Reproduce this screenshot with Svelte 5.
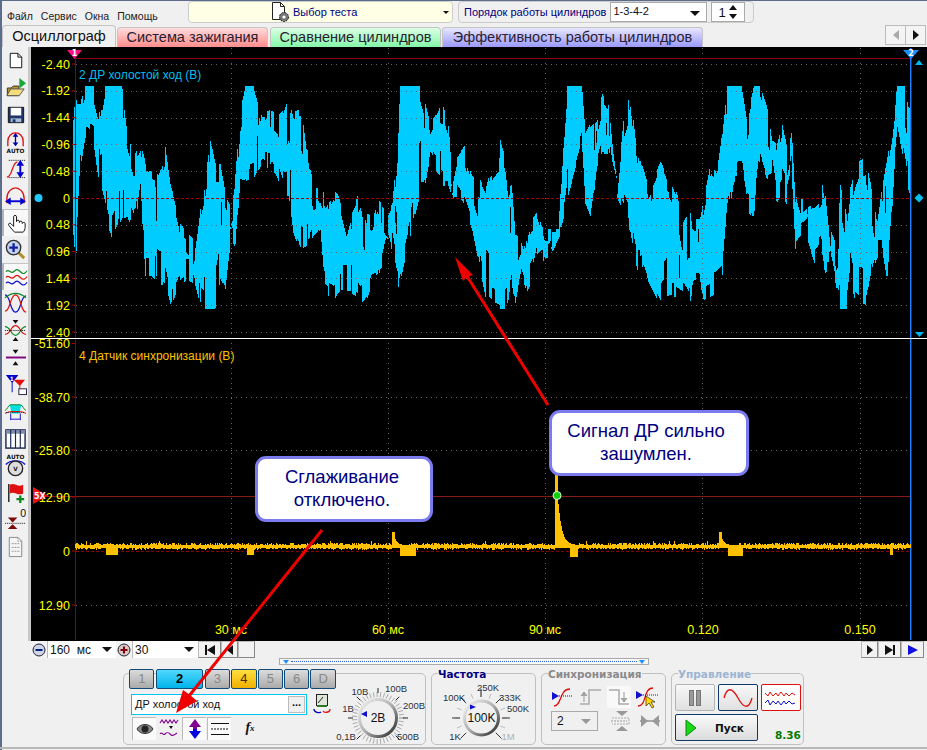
<script>
    function rng(seed) {
        let s = seed;
        return () => (s = (s * 16807) % 2147483647) / 2147483647;
    }

    // envelope of the noisy channel, read off the picture: x, top, bottom
    const left = [[0,60,270],[15,18,185],[40,18,200],[60,100,350],[75,18,410],[95,18,480],[125,18,420],[140,140,410],[160,210,460],[180,170,330],[195,250,590],[215,255,590],[235,260,610],[255,200,620],[270,310,687],[300,430,615],[320,455,600],[340,480,610],[355,370,670],[375,290,687],[390,180,687],[405,250,687],[420,250,600],[435,340,630],[450,370,500],[465,280,530],[480,90,315],[495,18,310],[520,18,300],[545,95,260],[575,85,270],[590,100,290],[610,85,350],[625,35,350],[640,95,470],[665,85,510],[685,240,500],[700,310,470],[720,310,450],[735,350,640],[760,310,670],[775,330,640],[800,430,640],[815,375,640],[840,325,680],[860,390,660],[875,400,620],[890,350,620],[920,400,500],[935,370,555],[950,200,640],[960,18,600],[1020,18,350],[1035,70,350],[1050,130,270],[1085,65,320],[1105,140,320],[1115,290,355],[1130,220,350],[1150,190,380],[1175,265,450],[1195,290,550],[1215,330,650],[1230,270,670],[1255,235,680]];
    const right = [[0,180,687],[15,235,687],[25,320,680],[32,260,600],[45,440,680],[60,450,600],[75,490,650],[85,415,630],[100,390,600],[110,375,550],[125,425,540],[140,430,550],[160,430,520],[175,430,490],[190,155,430],[200,18,360],[245,18,200],[255,150,380],[270,120,420],[290,100,270],[305,40,220],[325,70,225],[335,180,310],[350,290,370],[370,80,410],[390,18,460],[410,200,570],[430,270,560],[445,320,610],[480,240,680],[500,290,650],[530,340,650],[545,430,660],[565,395,687],[580,410,620],[600,410,625],[610,350,660],[630,245,650],[650,270,640],[665,160,625],[680,18,445],[700,18,310],[725,18,300],[740,110,400],[760,18,410],[780,18,240],[800,80,300],[815,180,280],[830,190,380],[845,130,350],[860,200,380],[875,115,320],[885,310,520],[900,360,500],[920,345,480],[945,340,560],[960,325,540],[975,300,580],[990,440,570],[1010,490,665],[1020,305,687],[1040,400,687],[1050,315,600],[1065,260,670],[1075,235,680],[1095,225,687],[1110,295,610],[1130,430,540],[1145,320,540],[1160,235,630],[1175,150,420],[1190,18,140],[1215,18,270],[1225,40,340],[1232,40,340]];

    const envelope = [[73, 110, 245], [76, 100, 252]]
        .concat(left.map(([x, t, b]) => [80 + x / 3, 80 + t / 3, 80 + b / 3]))
        .concat(right.map(([x, t, b]) => [500 + x / 3, 80 + t / 3, 80 + b / 3]))
        .sort((a, b) => a[0] - b[0]);

    function buildNoise() {
        const r = rng(4711);
        let d = "", i = 0, j1 = 0, j2 = 0, hold = 0;
        for (let x = 73; x < 911; x++) {
            while (i < envelope.length - 2 && envelope[i + 1][0] <= x) i++;
            const a = envelope[i], b = envelope[i + 1];
            const f = Math.min(1, (x - a[0]) / (b[0] - a[0] || 1));
            let top = a[1] + (b[1] - a[1]) * f;
            let bot = a[2] + (b[2] - a[2]) * f;
            if (hold-- <= 0) {
                hold = Math.floor(r() * 4);
                j1 = Math.pow(r(), 2) * 22;
                j2 = Math.pow(r(), 2) * 24;
                // deep cuts give the needle look of the trace
                if (r() < 0.09) j1 += 10 + r() * 30;
                if (r() < 0.09) j2 += 10 + r() * 26;
            }
            const thin = Math.max(24, (bot - top) * 0.5);
            top = a[1] < 87 && b[1] < 87 ? 86 : Math.max(86, Math.round(top + Math.min(j1, thin)));
            bot = a[2] > 308 && b[2] > 308 ? 309 : Math.min(309, Math.round(bot - Math.min(j2, thin)));
            if (bot <= top) bot = top + 2;
            if (r() < 0.025 && bot - top > 40) {
                const mid = top + Math.floor((bot - top) * (0.15 + r() * 0.25));
                d += `M${x}.5 ${top}V${mid}M${x}.5 ${mid + 12 + Math.floor(r() * 18)}V${bot}`;
            } else {
                d += `M${x}.5 ${top}V${bot}`;
            }
        }
        return d;
    }

    function buildSync() {
        const r = rng(90210);
        const pulses = [[392, 532, 11], [555, 470, 17], [719, 532, 11]];
        const blips = [[106, 117, 555], [247, 253, 555], [400, 415, 556], [570, 577, 557], [728, 742, 556], [890, 892, 555]];
        let d = "";
        for (let x = 75; x < 911; x++) {
            let top = 545 - Math.floor(r() * 2.6);
            let bot = 548 + Math.floor(r() * 2.2);
            if (r() < 0.012) top = 541;
            for (const [px, peak, w] of pulses) {
                if (x >= px && x < px + 3) {
                    top = peak;
                    bot = 548;
                } else if (x >= px + 3 && x < px + w + 6) {
                    const k = Math.exp(-(x - px - 2) / (w / 4.5));
                    top = Math.round(545 - (545 - peak) * k * 0.72);
                    bot = Math.max(top + 4, bot > 548 ? 548 : bot);
                }
            }
            for (const [a, b, y] of blips) if (x >= a && x <= b) bot = y;
            d += `M${x}.5 ${top}V${bot}`;
        }
        return d;
    }

    const noisePath = buildNoise();
    const syncPath = buildSync();

    const gridX = [231, 388, 545, 702, 860];
    const upperScale = ["-2.40", "-1.92", "-1.44", "-0.96", "-0.48", "0", "0.48", "0.96", "1.44", "1.92", "2.40"];
    const lowerScale = [[343.5, "-51.60"], [397, "-38.70"], [450, "-25.80"], [497, "12.90"], [551, "0"], [605, "12.90"]];
    const timeScale = [[231, "30 мс"], [388, "60 мс"], [545, "90 мс"], [703, "0.120"], [860, "0.150"]];
    const upperY = upperScale.map((_, i) => 64 + i * 26.8);

    function ticks(cx, cy, from, to, n, r1, r2) {
        const out = [];
        for (let i = 0; i < n; i++) {
            const a = ((from + ((to - from) * i) / (n - 1)) * Math.PI) / 180;
            out.push([cx + r1 * Math.cos(a), cy + r1 * Math.sin(a), cx + r2 * Math.cos(a), cy + r2 * Math.sin(a)]);
        }
        return out;
    }

    const voltTicks = ticks(378, 718, 0, 360, 44, 21, 26);
    const voltMarks = ticks(378, 718, 135, 405, 7, 25, 30);
    const freqTicks = ticks(481, 718, 135, 405, 13, 21, 26);
    const freqMarks = ticks(481, 718, 135, 405, 7, 21, 29);

    const voltLabels = [[360, 695, "10В"], [396, 692, "100В"], [414, 709, "200В"], [408, 740, "500В"], [346, 740, "0,1В"], [348, 712, "1В"]];
    const freqLabels = [[488, 691, "250K"], [454, 701, "100K"], [510, 701, "333K"], [518, 712, "500K"], [455, 740, "1K"]];
    const channels = [
        { name: "1", cls: "" },
        { name: "2", cls: "on-blue" },
        { name: "3", cls: "" },
        { name: "4", cls: "on-yellow" },
        { name: "5", cls: "" },
        { name: "6", cls: "" },
        { name: "D", cls: "" },
    ];
</script>

<div class="app">
    <header class="topbar">
        <nav class="menu">
            <span>Файл</span><span>Сервис</span><span>Окна</span><span>Помощь</span>
        </nav>
        <div class="test-select">
            <svg width="22" height="22" viewBox="0 0 22 22">
                <path d="M3.5 1.5h8l4 4v13h-12z" fill="#fff" stroke="#222" />
                <path d="M11.5 1.5v4h4" fill="none" stroke="#222" />
                <circle cx="15" cy="16" r="4.5" fill="#777" stroke="#222" stroke-dasharray="2 1" />
                <circle cx="15" cy="16" r="1.6" fill="#fff" />
            </svg>
            <span>Выбор теста</span>
            <i class="caret small"></i>
        </div>
        <div class="order">
            <span>Порядок работы цилиндров</span>
            <div class="order-select">1-3-4-2<i class="caret"></i></div>
            <div class="order-spin">1
                <svg width="10" height="16" viewBox="0 0 10 16"><path d="M5 1l4 5H1zM5 15L1 10h8z" fill="#111" /></svg>
            </div>
        </div>
    </header>

    <div class="tabs">
        <div class="tab active">Осциллограф</div>
        <div class="tab red">Система зажигания</div>
        <div class="tab green">Сравнение цилиндров</div>
        <div class="tab purple">Эффективность работы цилиндров</div>
        <div class="tab-nav">
            <span><svg width="8" height="10" viewBox="0 0 8 10"><path d="M7 0v10L1 5z" fill="#aaa" /></svg></span>
            <span><svg width="8" height="10" viewBox="0 0 8 10"><path d="M1 0v10l6-5z" fill="#111" /></svg></span>
        </div>
    </div>

    <main class="main">
        <aside class="tools">
            <div class="tool"><svg viewBox="0 0 24 24"><path d="M6.500 4.500h8l4 4v11h-12z" fill="#fff" stroke="#111" /><path d="M14.500 4.500v4h4" fill="none" stroke="#111" /></svg></div>
            <div class="tool"><svg viewBox="0 0 24 24"><path d="M3.500 12.500h4l2-2h6v10h-12z" fill="#b8962a" stroke="#333" /><path d="M3 20.500l4-7h14l-5 7z" fill="#f3dc7c" stroke="#555" /><path d="M16 2v11l7-5.500z" fill="#18a838" /></svg></div>
            <div class="tool"><svg viewBox="0 0 24 24"><path d="M4.500 4.500h16v16h-16z" fill="#22356a" stroke="#111" /><path d="M7 5h11v8H7z" fill="#fff" /><path d="M7 16h11v4H7z" fill="#a8bcd8" /><path d="M9 17h3v3H9z" fill="#22356a" /></svg></div>
            <div class="tool"><svg viewBox="0 0 24 24"><path d="M4 17V12C4 6 8 3 12 3s8 3 8 9v5" fill="none" stroke="#e01010" stroke-width="1.400" /><path d="M12 5v10" stroke="#0000b0" stroke-width="1.400" /><path d="M12 3l3 4H9zM12 17l-3-4h6z" fill="#0000b0" /><text x="12" y="23.500" class="tiny" text-anchor="middle">AUTO</text></svg></div>
            <div class="tool"><svg viewBox="0 0 24 24"><path d="M3 21c6 0 5-15 11-16" fill="none" stroke="#e01010" stroke-width="1.400" /><path d="M5 3.500h17M5 21.500h17" stroke="#111" stroke-dasharray="1 1" /><path d="M17 8v10" stroke="#0000d0" stroke-width="2" /><path d="M17 3l4 6h-8zM17 22l-4-6h8z" fill="#0000d0" /></svg></div>
            <div class="tool"><svg viewBox="0 0 24 24"><path d="M3 20v-5C3 8 8 4 12 4s9 4 9 11v5" fill="none" stroke="#e01010" stroke-width="1.400" /><path d="M5 18h14" stroke="#0000d0" stroke-width="2" /><path d="M1 18l6-4v8zM23 18l-6-4v8z" fill="#0000d0" /></svg></div>
            <div class="tool pressed"><svg viewBox="0 0 24 24"><path d="M9 20l-5-6c-1-2 1-3 2-2l3 3V5c0-2 3-2 3 0v5c0-2 3-2 3 0v1c0-2 3-2 3 0v1c0-1.500 3-1.500 3 0v4c0 2-1 4-2 5H10z" fill="#fff" stroke="#111" /></svg></div>
            <div class="tool"><svg viewBox="0 0 24 24"><path d="M14 14l7 7" stroke="#b08a2a" stroke-width="3" /><circle cx="10" cy="10" r="7.500" fill="#c4d4f0" stroke="#333" stroke-width="1.400" /><path d="M10 5.500v9M5.500 10h9" stroke="#1020a0" stroke-width="2.400" /></svg></div>
            <div class="tool pressed"><svg viewBox="0 0 24 24" fill="none" stroke-width="1.200"><path d="M1 6c3-4 5 3 8 0s4-3 7 0 5 2 7-1" stroke="#0a8a20" /><path d="M1 12c3-4 5 3 8 0s4-3 7 0 5 2 7-1" stroke="#e01010" /><path d="M1 18c3-4 5 3 8 0s4-3 7 0 5 2 7-1" stroke="#1010d0" /></svg></div>
            <div class="tool"><svg viewBox="0 0 24 24" fill="none" stroke-width="1.300"><path d="M1 3c6 0 5 18 11 18S17 4 23 4" stroke="#1010d0" /><path d="M1 20c6 0 5-17 11-17s5 18 11 18" stroke="#e01010" /><path d="M1 6c8-6 14-6 22 0" stroke="#0a8a20" /></svg></div>
            <div class="tool"><svg viewBox="0 0 24 24" fill="none" stroke-width="1.300"><path d="M1 8c6 0 6 9 11 9s5-9 11-9" stroke="#0a8a20" /><path d="M1 16c6 0 6-9 11-9s5 9 11 9" stroke="#e01010" /><path d="M1 12h22" stroke="#111" stroke-dasharray="1 1" /><path d="M12 5L9 1h6zM12 19l3 4H9z" fill="#111" /></svg></div>
            <div class="tool"><svg viewBox="0 0 24 24"><path d="M12 8L9 4h6zM12 16l3 4H9z" fill="#111" /><path d="M2 12h21" stroke="#800080" stroke-width="2" /></svg></div>
            <div class="tool"><svg viewBox="0 0 24 24"><path d="M2 2h13l-6 8v10H8V10z" fill="#0000d0" /><path d="M10 7h12l-5 6v8h-1v-8z" fill="#e01010" /><text x="6" y="8" class="tiny white">1</text><rect x="15.500" y="16.500" width="8" height="6" fill="#fff" stroke="#224" /></svg></div>
            <div class="tool"><svg viewBox="0 0 24 24"><path d="M6 5h12l-2 9h-8z" fill="#00e0e0" /><path d="M1 11c3-1 3-6 6-6h10c3 0 3 5 6 6" fill="none" stroke="#0a8a20" /><path d="M1 14c3-1 4-2 6-2h10c2 0 3 1 6 2" fill="none" stroke="#e01010" /><path d="M2 13h20" stroke="#111" stroke-dasharray="1 1" /><path d="M7 14v7M17 14v7M7 20h10" stroke="#1010d0" /></svg></div>
            <div class="tool"><svg viewBox="0 0 24 24"><rect x="2" y="3" width="20" height="19" fill="#fff" stroke="#1a2a50" stroke-width="1.500" /><rect x="2" y="3" width="20" height="4" fill="#7d8aa8" /><path d="M7 3v19M12 3v19M17 3v19" stroke="#1a2a50" stroke-width="1.200" /></svg></div>
            <div class="tool"><svg viewBox="0 0 24 24"><text x="12" y="5.500" class="tiny" text-anchor="middle">AUTO</text><path d="M2 11c4-5 16-5 20 0" fill="none" stroke="#1010d0" stroke-width="1.400" /><circle cx="12" cy="15" r="7.500" fill="#ddd" stroke="#222" stroke-width="1.400" /><text x="12" y="18" class="tiny" text-anchor="middle">V</text></svg></div>
            <div class="tool"><svg viewBox="0 0 24 24"><path d="M5 3v19" stroke="#222" stroke-width="1.500" /><path d="M6 4c5-3 8 3 14 0v9c-6 3-9-3-14 0z" fill="#e01010" /><path d="M17 15v8M13 19h8" stroke="#0a8a20" stroke-width="2.400" /></svg></div>
            <div class="tool"><svg viewBox="0 0 24 24"><text x="20" y="9" class="zero" text-anchor="middle">0</text><path d="M9 15L4 10h10zM9 17l5 5H4z" fill="#7a0a0a" /><path d="M1 16h22" stroke="#111" stroke-dasharray="1 1" /></svg></div>
            <div class="tool"><svg viewBox="0 0 24 24"><path d="M5.500 2.500h9l4 4v16h-13z" fill="#f4f4f4" stroke="#888" /><path d="M14.500 2.500v4h4M8 9h8M8 13h8M8 17h8" fill="none" stroke="#999" stroke-dasharray="2 1" /></svg></div>
        </aside>

        <svg class="plot" width="896" height="594" viewBox="31 47 896 594">
            <rect x="31" y="47" width="896" height="594" fill="#000" />
            <path d={noisePath} stroke="#00ccff" stroke-width="1" shape-rendering="crispEdges" />

            <g stroke="#666" stroke-dasharray="1 4" shape-rendering="crispEdges">
                {#each gridX as x}
                    <line x1={x + 0.5} y1="48" x2={x + 0.5} y2="640" />
                {/each}
                {#each upperY as y}
                    <line x1="76" y1={Math.round(y) + 0.5} x2="910" y2={Math.round(y) + 0.5} />
                {/each}
                {#each [397, 450, 605] as y}
                    <line x1="76" y1={y + 0.5} x2="910" y2={y + 0.5} />
                {/each}
            </g>
            <g shape-rendering="crispEdges">
                <line x1="76" y1="198.500" x2="910" y2="198.500" stroke="#a00000" stroke-dasharray="3 2" />
                <line x1="76" y1="551.500" x2="910" y2="551.500" stroke="#8a0000" stroke-dasharray="3 2" />
                <line x1="47" y1="496.500" x2="911" y2="496.500" stroke="#8a1a14" />
                <line x1="75" y1="58.500" x2="911" y2="58.500" stroke="#900010" stroke-width="1" />
                <line x1="75.500" y1="48" x2="75.500" y2="640" stroke="#8a0010" />
                <line x1="911.500" y1="48" x2="911.500" y2="640" stroke="#a00010" />
                <line x1="910.500" y1="48" x2="910.500" y2="640" stroke="#1e7fff" />
                <line x1="31" y1="338.500" x2="927" y2="338.500" stroke="#fff" />
            </g>

            <path d={syncPath} stroke="#ffc000" stroke-width="1" shape-rendering="crispEdges" />

            <g class="scale">
                {#each upperScale as label, i}
                    <text x="70" y={upperY[i] + 4.500} text-anchor="end">{label}</text>
                    <line x1="72" y1={upperY[i]} x2="75" y2={upperY[i]} stroke="#b00000" />
                {/each}
                {#each lowerScale as [y, label]}
                    <text x="70" y={y + 4.500} text-anchor="end">{label}</text>
                    <line x1="72" y1={y} x2="75" y2={y} stroke="#b00000" />
                {/each}
                {#each timeScale as [x, label]}
                    <text {x} y="634" text-anchor="middle">{label}</text>
                {/each}
            </g>

            <text x="79" y="79" class="trace-blue">2 ДР холостой ход (В)</text>
            <text x="79" y="360" class="trace-yellow">4 Датчик синхронизации (В)</text>

            <path d="M67 50h15l-7.500 9z" fill="#ff1080" />
            <text x="74.500" y="56" class="marker" text-anchor="middle">1</text>
            <path d="M903 50h16l-8 9z" fill="#1e8fff" />
            <text x="911" y="56" class="marker" text-anchor="middle">2</text>
            <path d="M915 65l4-5 4 5z" fill="#00b8f0" />
            <path d="M919 193.500l4.500 4.500-4.500 4.500-4.500-4.500z" fill="#00c0f0" />
            <path d="M915 332h9l-4.500 5z" fill="#00b8f0" />
            <circle cx="38.500" cy="198" r="4" fill="#20c8ff" />
            <path d="M33 487l15 9-15 8z" fill="#f01010" />
            <text x="34" y="499" class="marker">5X</text>
            <circle cx="557" cy="495.500" r="4" fill="#10d010" stroke="#d8ffd8" />
        </svg>
    </main>

    <div class="scrollrow">
        <span class="round-btn"><svg width="14" height="14" viewBox="0 0 14 14"><circle cx="7" cy="7" r="6" fill="#cfd4e6" stroke="#223" /><path d="M3.500 7h7" stroke="#002080" stroke-width="2" /></svg></span>
        <div class="combo first">160&nbsp; мс<i class="caret"></i></div>
        <span class="round-btn"><svg width="14" height="14" viewBox="0 0 14 14"><circle cx="7" cy="7" r="6" fill="#d8c8c8" stroke="#223" /><path d="M3.500 7h7M7 3.500v7" stroke="#800010" stroke-width="2" /></svg></span>
        <div class="combo second">30<i class="caret"></i></div>
        <span class="nav wide"><svg width="12" height="10" viewBox="0 0 12 10"><path d="M1 0h2v10H1zM11 0v10L3 5z" fill="#111" /></svg></span>
        <span class="nav"><svg width="8" height="10" viewBox="0 0 8 10"><path d="M7 0v10L1 5z" fill="#111" /></svg></span>
        <span class="nav"></span>
        <span class="spacer"></span>
        <span class="nav"><svg width="8" height="10" viewBox="0 0 8 10"><path d="M1 0v10l6-5z" fill="#111" /></svg></span>
        <span class="nav wide"><svg width="12" height="10" viewBox="0 0 12 10"><path d="M1 0v10l8-5zM9 0h2v10H9z" fill="#111" /></svg></span>
        <span class="nav wide"><svg width="12" height="10" viewBox="0 0 12 10"><path d="M1 0v10l10-5z" fill="#1010e0" /></svg></span>
    </div>

    <div class="strip"><i></i><b></b><i></i></div>

    <section class="panels">
        <div class="panel chan-panel">
            <div class="chan-left">
                <div class="channels">
                    {#each channels as ch}
                        <span class="chan {ch.cls}">{ch.name}</span>
                    {/each}
                </div>
                <div class="name-row">
                    <div class="name-input">ДР холостой ход<span class="dots">...</span></div>
                    <svg width="20" height="22" viewBox="0 0 20 22"><rect x="4.500" y="1.500" width="11" height="11" fill="#dfe8d8" stroke="#222" /><path d="M6 10l5-6" stroke="#222" /><path d="M5 12h10v2H5z" fill="#2a7a2a" /><path d="M2 16c0 4 6 4 7 3" fill="none" stroke="#0000c0" stroke-width="1.300" /><path d="M18 16c0 4-6 4-7 2" fill="none" stroke="#e01010" stroke-width="1.300" /></svg>
                </div>
                <div class="icons-row">
                    <span class="ico pressed"><svg width="18" height="12" viewBox="0 0 18 12"><path d="M1 6c3-6 13-6 16 0-3 6-13 6-16 0z" fill="#888" stroke="#333" /><circle cx="9" cy="6" r="3.500" fill="#222" /></svg></span>
                    <span class="ico"><svg width="20" height="20" viewBox="0 0 20 20" fill="none" stroke="#800090" stroke-width="1.100"><path d="M1 5l2-3 2 3 2-3 2 3 2-3 2 3 2-3 2 3 2-3" /><path d="M1 16c2-3 3 2 5 0s3-2 5 0 3 2 7-1" /><path d="M10 8h4l-2 3z" fill="#111" stroke="none" /></svg></span>
                    <span class="ico pressed"><svg width="16" height="22" viewBox="0 0 16 22"><path d="M8 1l6 8h-4v2H6V9H2z" fill="#800090" /><path d="M8 21l6-8h-4v-2H6v2H2z" fill="#0000e0" /></svg></span>
                    <span class="ico pressed"><svg width="20" height="18" viewBox="0 0 20 18"><path d="M1 3.500h18M1 14.500h18" stroke="#111" /><path d="M1 9h18" stroke="#111" stroke-dasharray="2 1" /></svg></span>
                    <span class="ico fx">f<sub>x</sub></span>
                </div>
            </div>
            <svg class="knob" width="90" height="70" viewBox="336 674 90 70">
                <defs>
                    <linearGradient id="ring" x1="0" y1="0" x2="1" y2="1">
                        <stop offset="0" stop-color="#f4f4f4" />
                        <stop offset="0.5" stop-color="#b0b0b0" />
                        <stop offset="1" stop-color="#222" />
                    </linearGradient>
                </defs>
                {#each voltTicks as t}
                    <line x1={t[0]} y1={t[1]} x2={t[2]} y2={t[3]} stroke="#aaa" />
                {/each}
                {#each voltMarks as t}
                    <line x1={t[0]} y1={t[1]} x2={t[2]} y2={t[3]} stroke="#222" />
                {/each}
                <circle cx="378" cy="718" r="18.500" fill="#f0f0f0" stroke="url(#ring)" stroke-width="3" />
                <path d="M361 714l6-3v6z" fill="#1010d0" />
                <text x="378" y="722" class="knob-value" text-anchor="middle">2В</text>
                {#each voltLabels as [x, y, label]}
                    <text {x} {y} class="knob-label" text-anchor="middle">{label}</text>
                {/each}
            </svg>
        </div>

        <div class="panel freq-panel">
            <div class="title navy">Частота</div>
            <svg width="103" height="63" viewBox="432 681 103 63">
                {#each freqTicks as t}
                    <line x1={t[0]} y1={t[1]} x2={t[2]} y2={t[3]} stroke="#bbb" />
                {/each}
                {#each freqMarks as t}
                    <line x1={t[0]} y1={t[1]} x2={t[2]} y2={t[3]} stroke="#333" />
                {/each}
                <circle cx="481.500" cy="718" r="17" fill="#f0f0f0" stroke="url(#ring)" stroke-width="3" />
                <path d="M470 704.500l6 2.500-6 2.500z" fill="#1010d0" />
                <text x="481.500" y="722" class="knob-value" text-anchor="middle">100K</text>
                {#each freqLabels as [x, y, label]}
                    <text {x} {y} class="knob-label" text-anchor="middle">{label}</text>
                {/each}
                <text x="508" y="740" class="knob-label off" text-anchor="middle">1M</text>
            </svg>
        </div>

        <div class="panel sync-panel">
            <div class="title gray">Синхронизация</div>
            <div class="sync-row">
                <svg width="24" height="22" viewBox="0 0 24 22"><path d="M3 20c8 0 5-17 16-17" fill="none" stroke="#e01010" stroke-width="1.300" /><path d="M8 10h14" stroke="#1010d0" stroke-dasharray="1 1" /><path d="M1 6l7 4-7 4z" fill="#1010d0" /></svg>
                <svg width="24" height="22" viewBox="0 0 24 22"><path d="M1 18h9V4h12" fill="none" stroke="#aaa" stroke-width="1.500" /><path d="M5 8v8M2 10l3-4 3 4" fill="#aaa" stroke="#999" /></svg>
                <svg class="sync-on" width="24" height="22" viewBox="0 0 24 22"><path d="M2 4h10v14h10" fill="none" stroke="#aaa" stroke-width="1.500" /><path d="M17 6v8M14 12l3 4 3-4" fill="#aaa" stroke="#999" /></svg>
                <svg width="24" height="24" viewBox="0 0 24 24"><path d="M3 21c9 0 5-18 15-18" fill="none" stroke="#e01010" stroke-width="1.300" /><path d="M8 10h15" stroke="#1010d0" stroke-dasharray="1 1" /><path d="M1 6l7 4-7 4z" fill="#1010d0" /><path d="M11 11l0 10 3-3 3 5 2-1-3-5h4z" fill="#ffd800" stroke="#111" stroke-width="0.600" /></svg>
            </div>
            <div class="sync-row second">
                <div class="sync-combo">2<i class="caret gray-caret"></i></div>
                <svg width="24" height="22" viewBox="0 0 24 22"><path d="M6 1h12l-6 5zM6 21h12l-6-5z" fill="#999" /><path d="M2 8h17v6H2" fill="none" stroke="#aaa" stroke-dasharray="2 1" /><path d="M1 11h16" stroke="#999" stroke-dasharray="2 1" /></svg>
                <svg width="24" height="14" viewBox="0 0 24 14"><path d="M2 7h20" stroke="#aaa" stroke-width="2" /><path d="M3 1l7 6-7 6zM21 1l-7 6 7 6z" fill="#999" /></svg>
            </div>
        </div>

        <div class="panel ctrl-panel">
            <div class="title pale">Управление</div>
            <div class="ctrl-row">
                <span class="ctrl off"><svg width="14" height="18" viewBox="0 0 14 18"><rect x="1.500" y="1.500" width="4" height="15" fill="#999" stroke="#777" /><rect x="8.500" y="1.500" width="4" height="15" fill="#999" stroke="#777" /></svg></span>
                <span class="ctrl navy-line"><svg width="30" height="22" viewBox="0 0 30 22"><path d="M1 11C4 0 9 0 15 11s11 11 14 0" fill="none" stroke="#e01010" stroke-width="1.300" /></svg></span>
                <span class="ctrl red-line"><svg width="34" height="20" viewBox="0 0 34 20" fill="none" stroke-width="1"><path d="M1 5l3 3 2-4 3 4 3-3 2 3 3-4 3 4 2-3 3 3 3-3 3 2" stroke="#e01010" /><path d="M1 15l3-3 2 5 3-4 3 3 2-3 3 4 3-4 2 3 3-3 3 3 3-1" stroke="#1010d0" /></svg></span>
            </div>
            <div class="ctrl-row">
                <span class="start"><svg width="12" height="18" viewBox="0 0 12 18"><path d="M1 1v16l10-8z" fill="#18d818" stroke="#0a8a0a" /></svg><b>Пуск</b></span>
                <b class="time">8.36</b>
            </div>
        </div>
    </section>

    <div class="statusline"></div>

    <div class="callout one">Сглаживание<br />отключено.</div>
    <div class="callout two">Сигнал ДР сильно<br />зашумлен.</div>

    <svg class="arrows" width="927" height="750" viewBox="0 0 927 750">
        <line x1="548" y1="405" x2="465" y2="273" stroke="#ee0000" stroke-width="3" />
        <path d="M455 257l18 18-6 2-4 4z" fill="#ee0000" />
        <line x1="322" y1="530" x2="189" y2="696" stroke="#ee0000" stroke-width="3" />
        <path d="M176 713l7-23 7 5 7 6z" fill="#ee0000" />
    </svg>
</div>

<style>
    :global(body) {
        margin: 0;
        background: #f0f0f0;
    }
    .app {
        position: relative;
        width: 927px;
        height: 750px;
        overflow: hidden;
        display: flex;
        flex-direction: column;
        background: #f0f0f0;
        box-shadow: inset 2px 1px 0 #5b6c8c;
        font-family: "Liberation Sans", Arial, sans-serif;
        font-size: 11px;
        color: #111;
    }
    .topbar {
        height: 24px;
        display: flex;
        align-items: flex-start;
        flex: none;
    }
    .menu {
        width: 188px;
        padding: 10px 0 0 7px;
        box-sizing: border-box;
        display: flex;
        gap: 8px;
        font-size: 10.500px;
        color: #222;
    }
    .test-select {
        width: 265px;
        height: 22px;
        margin-top: 1px;
        box-sizing: border-box;
        border: 1px solid #ccc;
        border-radius: 4px;
        background: #ffffe6;
        color: #000080;
        display: flex;
        align-items: center;
        position: relative;
        padding-left: 80px;
        gap: 2px;
    }
    .test-select .caret {
        position: absolute;
        right: 3px;
        top: 9px;
    }
    .order {
        width: 296px;
        height: 22px;
        margin-left: 5px;
        margin-top: 1px;
        box-sizing: border-box;
        border: 1px solid #ccc;
        border-radius: 4px;
        display: flex;
        align-items: center;
        padding-left: 5px;
        color: #000080;
    }
    .order-select {
        width: 97px;
        height: 20px;
        box-sizing: border-box;
        margin-left: 4px;
        border: 1px solid #aaa;
        background: #fff;
        color: #111;
        padding: 2px 2px;
        position: relative;
        font-size: 11px;
    }
    .order-select .caret {
        position: absolute;
        right: 6px;
        top: 8px;
    }
    .order-spin {
        width: 34px;
        height: 20px;
        box-sizing: border-box;
        margin-left: 4px;
        border: 1px solid #aaa;
        background: #fff;
        color: #111;
        font-size: 13px;
        display: flex;
        align-items: center;
        justify-content: space-between;
        padding: 0 6px;
    }
    .caret {
        display: inline-block;
        width: 0;
        height: 0;
        border-left: 5px solid transparent;
        border-right: 5px solid transparent;
        border-top: 5px solid #111;
    }
    .caret.small {
        border-left-width: 3px;
        border-right-width: 3px;
        border-top-width: 3px;
    }
    .caret.gray-caret {
        border-top-color: #999;
    }
    .tabs {
        height: 23px;
        flex: none;
        display: flex;
        align-items: flex-end;
        padding-left: 2px;
        position: relative;
        font-size: 14.500px;
    }
    .tab {
        height: 20px;
        box-sizing: border-box;
        border: 1px solid #c4c4c4;
        border-bottom: none;
        border-radius: 4px 4px 0 0;
        text-align: center;
        line-height: 19px;
        color: #2a2030;
        margin-right: 1px;
    }
    .tab.active {
        width: 114px;
        height: 22px;
        background: #f0f0f0;
        line-height: 21px;
        color: #111;
    }
    .tab.red {
        width: 151px;
        background: linear-gradient(#ffdcdc, #ff8c8c);
        margin-right: 2px;
    }
    .tab.green {
        width: 171px;
        background: linear-gradient(#dcffe4, #84f8a8);
    }
    .tab.purple {
        width: 261px;
        background: linear-gradient(#e6e6ff, #9a9aff);
    }
    .tab-nav {
        margin-left: auto;
        margin-right: 1px;
        margin-bottom: 2px;
        display: flex;
        border: 1px solid #bbb;
        height: 20px;
        box-sizing: border-box;
    }
    .tab-nav span {
        width: 19px;
        display: flex;
        align-items: center;
        justify-content: center;
        background: #f4f4f4;
    }
    .tab-nav span + span {
        border-left: 1px solid #bbb;
    }
    .main {
        height: 594px;
        display: flex;
        flex: none;
    }
    .tools {
        width: 31px;
        flex: none;
        display: flex;
        flex-direction: column;
        border-right: 3px solid #c8c8c8;
        box-sizing: border-box;
        padding-left: 2px;
    }
    .tool {
        height: 27px;
        width: 26px;
        flex: none;
        display: flex;
        align-items: center;
        justify-content: center;
        box-sizing: border-box;
    }
    .tool svg {
        width: 23px;
        height: 23px;
    }
    .tool.pressed {
        background: #f8f8f8;
        border-left: 2px solid #b4b4b4;
        border-top: 1px solid #c4c4c4;
    }
    .tiny {
        font-family: "DejaVu Sans", sans-serif;
        font-size: 6px;
        font-weight: bold;
        fill: #111;
    }
    .tiny.white {
        fill: #fff;
    }
    .zero {
        font-size: 11px;
        fill: #111;
    }
    .plot {
        display: block;
        flex: none;
    }
    .scale text {
        font-size: 12.500px;
        fill: #ffff00;
    }
    .trace-blue {
        font-size: 12px;
        fill: #00bff0;
    }
    .trace-yellow {
        font-size: 12px;
        fill: #ffc000;
    }
    .marker {
        font-family: "DejaVu Sans", sans-serif;
        font-size: 8px;
        font-weight: bold;
        fill: #fff;
    }
    .scrollrow {
        height: 17px;
        flex: none;
        display: flex;
        padding-left: 31px;
        padding-right: 3px;
        align-items: stretch;
    }
    .round-btn {
        width: 17px;
        display: flex;
        align-items: center;
        justify-content: center;
        background: #f4f4f4;
        border-right: 1px solid #bbb;
        box-sizing: border-box;
    }
    .combo {
        background: #fff;
        font-size: 12px;
        display: flex;
        align-items: center;
        justify-content: space-between;
        padding: 0 4px 0 2px;
        box-sizing: border-box;
    }
    .combo.first {
        width: 68px;
    }
    .combo.second {
        width: 65px;
    }
    .nav {
        width: 17px;
        display: flex;
        align-items: center;
        justify-content: center;
        background: #f2f2f2;
        border: 1px solid #bbb;
        border-right-color: #888;
        border-bottom-color: #888;
        box-sizing: border-box;
    }
    .nav.wide {
        width: 23px;
    }
    .spacer {
        flex: 1;
    }
    .strip {
        height: 7px;
        flex: none;
        width: 370px;
        margin-left: 279px;
        box-sizing: border-box;
        border: 1px solid #aaa;
        background: #f8f8f8;
        display: flex;
        align-items: center;
        padding: 0 3px;
        gap: 2px;
    }
    .strip b {
        flex: 1;
        border-top: 1px dotted #2060e0;
    }
    .strip i {
        width: 0;
        height: 0;
        border-left: 3px solid transparent;
        border-right: 3px solid transparent;
        border-top: 4px solid #2090ff;
    }
    .panels {
        display: flex;
        gap: 5px;
        margin: 8px 0 0 123px;
        height: 72px;
        flex: none;
    }
    .panel {
        border: 1px solid #c0c0c0;
        border-radius: 5px;
        box-sizing: border-box;
        height: 72px;
    }
    .title {
        font-family: "DejaVu Sans", sans-serif;
        font-weight: bold;
        font-size: 10.500px;
        line-height: 14px;
        background: #f0f0f0;
        width: fit-content;
        margin: -7px 0 0 6px;
    }
    .title.navy {
        color: #000080;
    }
    .title.gray {
        color: #8a8a8a;
    }
    .title.pale {
        color: #9db4d2;
    }
    .chan-panel {
        width: 303px;
        display: flex;
        padding-left: 5px;
    }
    .chan-left {
        width: 207px;
        flex: none;
        margin-top: -5px;
    }
    .channels {
        display: flex;
        gap: 1px;
    }
    .chan {
        width: 26px;
        height: 20px;
        box-sizing: border-box;
        border: 1px solid #0f4a78;
        border-radius: 2px;
        background: linear-gradient(#dcdcdc, #aaa);
        color: #888;
        text-align: center;
        font-size: 13px;
        line-height: 18px;
    }
    .chan.on-blue {
        width: 47px;
        margin: 0 1px;
        background: linear-gradient(#50d8ff, #00b4ea);
        color: #000;
        font-weight: bold;
    }
    .chan.on-yellow {
        background: linear-gradient(#ffdf40, #f0b000);
        color: #443300;
    }
    .name-row {
        display: flex;
        align-items: center;
        margin-top: 4px;
        padding-left: 2px;
        gap: 5px;
    }
    .name-input {
        width: 176px;
        height: 21px;
        box-sizing: border-box;
        border: 1px solid #00c4f4;
        background: #fff;
        font-size: 11px;
        padding-left: 3px;
        line-height: 19px;
        position: relative;
        flex: none;
    }
    .dots {
        position: absolute;
        right: 1px;
        top: 1px;
        width: 17px;
        height: 17px;
        background: #f0f0f0;
        border: 1px solid #bbb;
        box-sizing: border-box;
        font-weight: bold;
        line-height: 11px;
        text-align: center;
    }
    .icons-row {
        display: flex;
        align-items: center;
        gap: 1px;
        margin-top: 1px;
        height: 24px;
        padding-left: 3px;
    }
    .ico {
        width: 24px;
        height: 23px;
        display: flex;
        align-items: center;
        justify-content: center;
        box-sizing: border-box;
    }
    .ico.pressed {
        background: #fafafa;
        border-left: 1px solid #bbb;
        border-top: 1px solid #bbb;
    }
    .ico.fx {
        font-family: "Liberation Serif", serif;
        font-style: italic;
        font-weight: bold;
        font-size: 14px;
        margin-left: 6px;
    }
    .ico.fx sub {
        font-size: 9px;
        vertical-align: baseline;
    }
    .knob {
        display: block;
        flex: none;
    }
    .knob-label {
        font-size: 9.500px;
        fill: #2a3040;
    }
    .knob-label.off {
        fill: #b0b0b0;
    }
    .knob-value {
        font-size: 12px;
        fill: #111;
    }
    .freq-panel {
        width: 105px;
    }
    .freq-panel svg {
        display: block;
    }
    .sync-panel {
        width: 125px;
    }
    .sync-row {
        display: flex;
        align-items: center;
        padding: 4px 0 0 9px;
        gap: 4px;
    }
    .sync-row.second {
        padding-top: 1px;
    }
    .sync-on {
        background: #f9f9f9;
    }
    .sync-combo {
        width: 47px;
        height: 20px;
        box-sizing: border-box;
        border: 1px solid #aaa;
        font-size: 12px;
        display: flex;
        align-items: center;
        justify-content: space-between;
        padding: 0 6px 0 5px;
        margin-right: 8px;
    }
    .ctrl-panel {
        width: 133px;
    }
    .ctrl-row {
        display: flex;
        gap: 3px;
        padding: 3px 0 0 3px;
    }
    .ctrl {
        width: 40px;
        height: 27px;
        box-sizing: border-box;
        display: flex;
        align-items: center;
        justify-content: center;
        border-radius: 2px;
        background: linear-gradient(#f8f8f8, #e0e0e0);
    }
    .ctrl.off {
        border: 1px solid #b4b4b4;
    }
    .ctrl.navy-line {
        border: 1px solid #0f3a68;
    }
    .ctrl.red-line {
        border: 1px solid #e01010;
        background: #fff;
    }
    .start {
        width: 83px;
        height: 27px;
        box-sizing: border-box;
        border: 1px solid #0f3a68;
        border-radius: 2px;
        background: linear-gradient(#fafafa, #dcdcdc);
        display: flex;
        align-items: center;
        padding-left: 9px;
        gap: 18px;
        font-family: "DejaVu Sans", sans-serif;
        font-size: 10.500px;
    }
    .time {
        font-family: "DejaVu Sans", sans-serif;
        font-size: 10.500px;
        color: #007a00;
        align-self: flex-end;
        margin-left: 14px;
    }
    .statusline {
        margin-top: 2px;
        border-top: 2px solid #b8b8b8;
    }
    .callout {
        position: absolute;
        box-sizing: border-box;
        border: 3px solid #7b7bef;
        border-radius: 11px;
        background: #fff;
        color: #000080;
        font-size: 18.500px;
        line-height: 23px;
        text-align: center;
    }
    .callout.one {
        left: 255px;
        top: 456px;
        width: 178px;
        height: 66px;
        padding: 6px 4px 0 0;
    }
    .callout.two {
        left: 549px;
        top: 410px;
        width: 200px;
        height: 66px;
        padding: 6px 6px 0 0;
    }
    .arrows {
        position: absolute;
        left: 0;
        top: 0;
        pointer-events: none;
    }
</style>
